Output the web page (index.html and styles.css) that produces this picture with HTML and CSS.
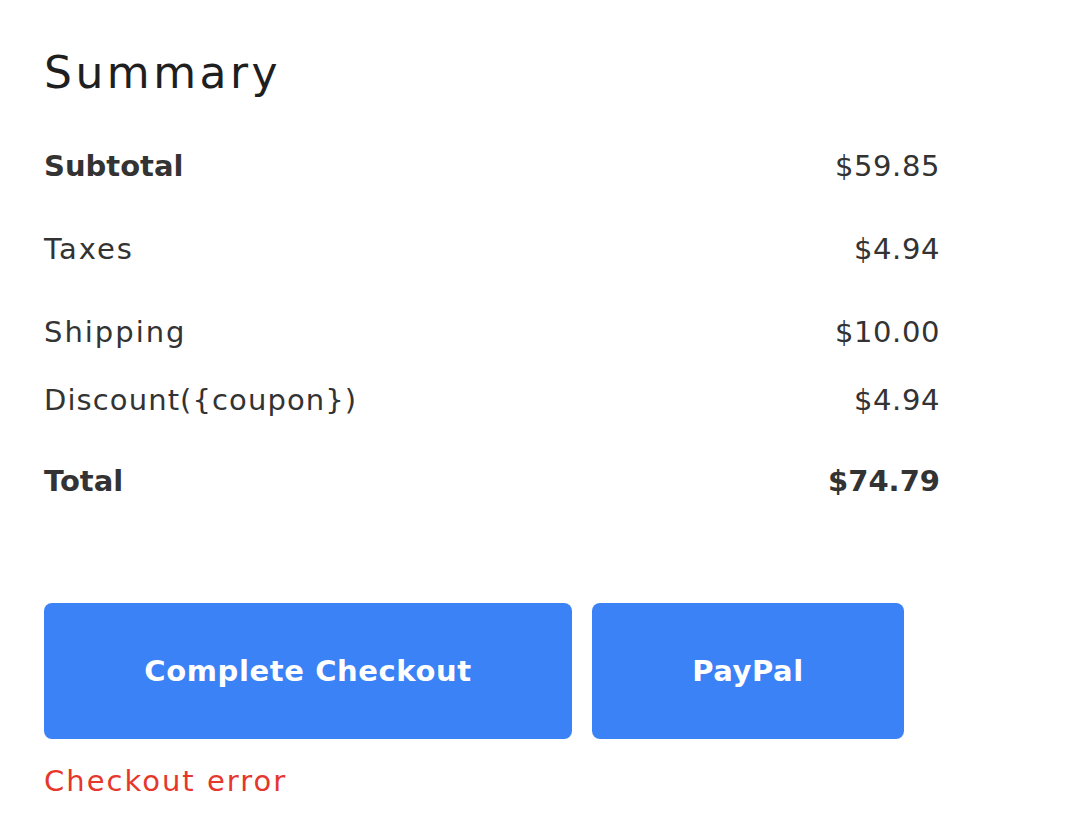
FILE: index.html
```html
<!DOCTYPE html>
<html>
<head>
<meta charset="utf-8">
<link rel="stylesheet" href="styles.css">
</head>
<body>
<main class="summary">
  <h1 class="title">Summary</h1>
  <div class="rows">
    <div class="row"><span class="label-bold">Subtotal</span><span class="value">$59.85</span></div>
    <div class="row"><span class="label">Taxes</span><span class="value">$4.94</span></div>
    <div class="row"><span class="label">Shipping</span><span class="value">$10.00</span></div>
    <div class="row row-tight"><span class="label label-narrow">Discount({coupon})</span><span class="value">$4.94</span></div>
    <div class="row row-total"><span class="label-bold">Total</span><span class="value-bold">$74.79</span></div>
  </div>
  <div class="actions">
    <button class="btn btn-checkout">Complete Checkout</button>
    <button class="btn btn-paypal">PayPal</button>
  </div>
  <p class="error">Checkout error</p>
</main>
</body>
</html>
```
FILE: styles.css
```css
* { box-sizing: border-box; }
body {
  margin: 0;
  background: #ffffff;
  font-family: "DejaVu Sans", "Open Sans", sans-serif;
  color: #333333;
}
.summary {
  padding: 43px 0 0 44px;
  width: 940px;
}
.title {
  margin: 0;
  font-size: 44px;
  font-weight: 400;
  line-height: 60px;
  letter-spacing: 3.5px;
  color: #1f1f1f;
}
.rows {
  margin-top: 43px;
  display: flex;
  flex-direction: column;
  gap: 43px;
}
.row {
  display: flex;
  justify-content: space-between;
  font-size: 29px;
  line-height: 40px;
  height: 40px;
}
.row-tight { margin-top: -15px; }
.row-total { margin-top: -2px; margin-bottom: 2px; }
.label { letter-spacing: 2px; }
.label-narrow { letter-spacing: 1.1px; }
.label-bold { font-weight: 700; }
.value { letter-spacing: 0.6px; }
.value-bold { font-weight: 700; }
.actions {
  margin-top: 100px;
  display: flex;
  gap: 20px;
}
.btn {
  flex: none;
  height: 136px;
  border: none;
  border-radius: 8px;
  background: #3b82f6;
  color: #ffffff;
  font-family: inherit;
  font-size: 29px;
  font-weight: 700;
  letter-spacing: 0.6px;
}
.btn-checkout { width: 528px; }
.btn-paypal { width: 312px; }
.error {
  margin: 22px 0 0 0;
  font-size: 29px;
  line-height: 40px;
  letter-spacing: 2px;
  color: #e5372c;
}
```
